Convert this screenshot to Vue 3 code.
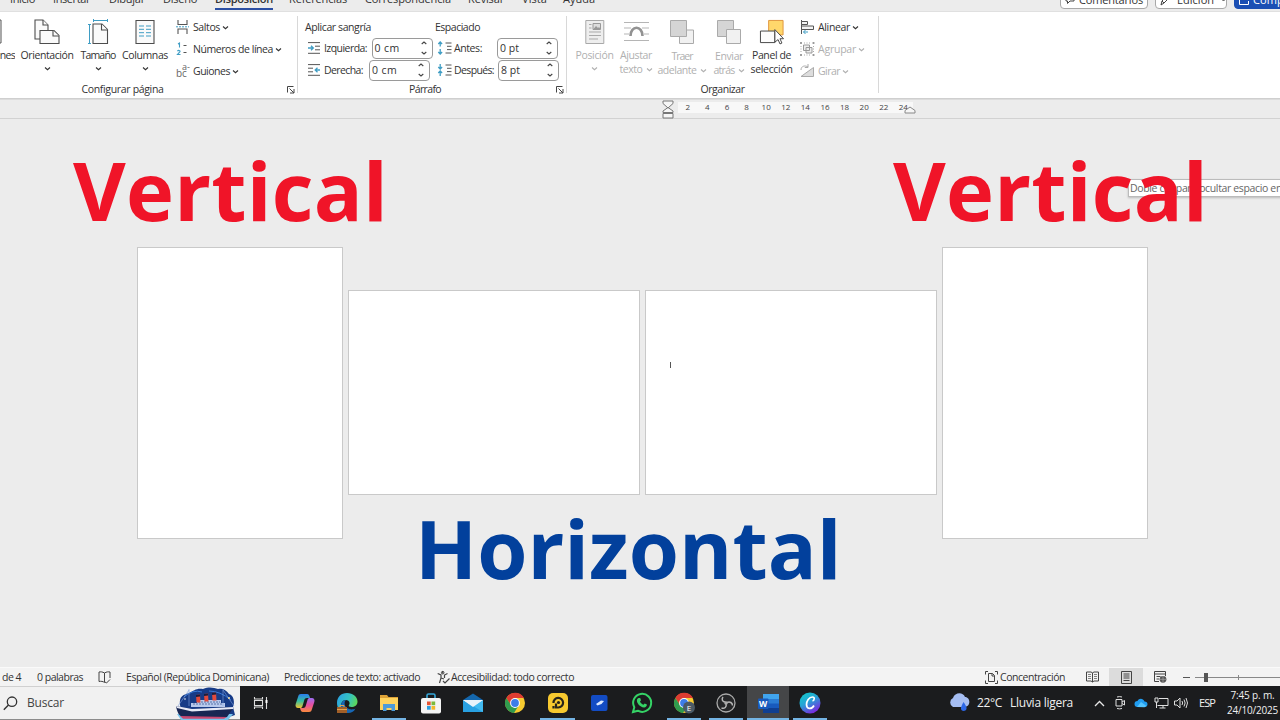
<script setup>
const tabs = [
  { name: 'Inicio', text: 25, cell: 43 },
  { name: 'Insertar', text: 37, cell: 56 },
  { name: 'Dibujar', text: 36, cell: 54 },
  { name: 'Diseño', text: 34, cell: 52 },
  { name: 'Disposición', text: 58, cell: 74, active: true },
  { name: 'Referencias', text: 58, cell: 76 },
  { name: 'Correspondencia', text: 86, cell: 103 },
  { name: 'Revisar', text: 36, cell: 54 },
  { name: 'Vista', text: 25, cell: 41 },
  { name: 'Ayuda', text: 32, cell: 40 }
]
const ruler = [2, 4, 6, 8, 10, 12, 14, 16, 18, 20, 22, 24]
const apps = [
  { id: 'task' }, { id: 'copilot' }, { id: 'edge' }, { id: 'files', open: true }, { id: 'store' },
  { id: 'mail' }, { id: 'chrome' }, { id: 'ld', open: true }, { id: 'blue' }, { id: 'whatsapp' },
  { id: 'chromeE', open: true }, { id: 'obs', open: true }, { id: 'word', open: true, active: true },
  { id: 'canva', open: true }
]

// Spreads the letters so that a label fills the given width in pixels.
const vFit = {
  mounted(el, { value }) {
    const natural = el.getBoundingClientRect().width
    el.style.letterSpacing = (value - natural) / el.textContent.length + 'px'
  }
}
</script>

<template>
  <div class="screen">
    <header class="tabs">
      <nav class="tab-list">
        <div v-for="t in tabs" :key="t.name" class="tab" :class="{ active: t.active }" :style="{ width: t.cell + 'px' }">
          <span v-fit="t.text" class="t">{{ t.name }}</span>
        </div>
      </nav>
      <div class="tab-actions">
        <div class="pill comments">
          <svg width="10" height="12" viewBox="0 0 10 12"><path d="M1 1h8v6H5L2.500 9.500V7H1z" fill="none" stroke="#444" /></svg>
          <span v-fit="64" class="t">Comentarios</span>
        </div>
        <div class="pill editing">
          <svg width="11" height="12" viewBox="0 0 11 12"><path d="M1 11l1-4 6-6 2 2-6 6zM2 7l2 2" fill="none" stroke="#444" /></svg>
          <span v-fit="37" class="t">Edición</span>
          <svg width="7" height="4" viewBox="0 0 7 4"><path d="M1 .5l2.500 2.500L6 .5" fill="none" stroke="#444" /></svg>
        </div>
        <div class="pill share">
          <svg width="10" height="12" viewBox="0 0 10 12"><path d="M3 4H.5v6.500h9V7M3 6c0-3 2-4 5-4M6 0l2.500 2L6 4.500" fill="none" stroke="#fff" /></svg>
          <span v-fit="53" class="t">Compartir</span>
        </div>
      </div>
    </header>

    <section class="ribbon">
      <div class="group setup">
        <div class="body">
          <div class="big margins">
            <svg width="20" height="26" viewBox="0 0 20 26"><path d="M1 1h18v23H1zM16 1v23" fill="#fafafa" stroke="#555" /></svg>
            <span v-fit="43" class="t">Márgenes</span>
          </div>
          <div class="big orient">
            <svg width="26" height="26" viewBox="0 0 26 26"><g fill="#fafafa" stroke="#4d4d4d" stroke-width="1.100"><path d="M1 1h8l5 5v14H1z" /><path d="M9 1v5h5" /><path d="M6 11.500h14l5 5V24.500H6z" /><path d="M19 11.500v5.500h6" /></g></svg>
            <span v-fit="53" class="t">Orientación</span>
            <svg class="chev" width="7" height="4" viewBox="0 0 7 4"><path d="M1 .5l2.500 2.200L6 .5" /></svg>
          </div>
          <div class="big size">
            <svg width="21" height="26" viewBox="0 0 21 26"><path d="M5.500 1.500h14M5.500 0v3M19.500 0v3M1.500 5.500v19M0 5.500h3M0 24.500h3" fill="none" stroke="#3f9dc4" /><g fill="#fafafa" stroke="#4d4d4d" stroke-width="1.100"><path d="M5 5h9l5.500 5.500v14H5z" /><path d="M13.500 5v6h6" /></g></svg>
            <span v-fit="35" class="t">Tamaño</span>
            <svg class="chev" width="7" height="4" viewBox="0 0 7 4"><path d="M1 .5l2.500 2.200L6 .5" /></svg>
          </div>
          <div class="big cols">
            <svg width="20" height="26" viewBox="0 0 20 26"><path d="M1 1.500h18v23H1z" fill="#fafafa" stroke="#4d4d4d" stroke-width="1.100" /><path d="M4 7h5M4 10.300h5M4 13.700h5M4 17h5M11 7h5M11 10.300h5M11 13.700h5M11 17h5" stroke="#3f9dc4" /></svg>
            <span v-fit="46" class="t">Columnas</span>
            <svg class="chev" width="7" height="4" viewBox="0 0 7 4"><path d="M1 .5l2.500 2.200L6 .5" /></svg>
          </div>
          <div class="smalls">
            <div class="small">
              <svg width="13" height="14" viewBox="0 0 13 14"><path d="M2 0v4.500h9V0M2 14V9h9v5" fill="none" stroke="#555" stroke-width="1.100" /><path d="M0 6.800h13" stroke="#3f9dc4" stroke-dasharray="2 1" /></svg>
              <span v-fit="27" class="t">Saltos</span>
              <svg class="chev" width="7" height="4" viewBox="0 0 7 4"><path d="M1 .5l2.500 2.200L6 .5" /></svg>
            </div>
            <div class="small">
              <svg width="13" height="14" viewBox="0 0 13 14"><path d="M2 2l1.500-1v4.500M1.500 9.200c.5-1.200 3-1 2.500.5L1.500 12.500H4.500" fill="none" stroke="#3f9dc4" stroke-width="1.100" /><path d="M7.500 3.500h3M7.500 10.500h3" stroke="#555" stroke-width="1.200" /></svg>
              <span v-fit="80" class="t">Números de línea</span>
              <svg class="chev" width="7" height="4" viewBox="0 0 7 4"><path d="M1 .5l2.500 2.200L6 .5" /></svg>
            </div>
            <div class="small">
              <span class="hyph"><span class="ha">a-</span><span class="hb">bc</span></span>
              <span v-fit="37" class="t">Guiones</span>
              <svg class="chev" width="7" height="4" viewBox="0 0 7 4"><path d="M1 .5l2.500 2.200L6 .5" /></svg>
            </div>
          </div>
        </div>
        <div class="foot"><span v-fit="82" class="t">Configurar página</span>
          <svg class="launch" width="8" height="8" viewBox="0 0 8 8"><path d="M.5 6.500v-6h6M2.500 2.500L7 7M7 3v4H3" /></svg></div>
      </div>

      <div class="group para">
        <div class="para-body">
          <div class="pcol left">
            <div class="prow"><span v-fit="66" class="t">Aplicar sangría</span></div>
            <div class="prow fields">
              <svg width="13" height="12" viewBox="0 0 13 12"><path d="M0 .6h12M7 4.200h5M7 7.800h5M0 11.300h12" stroke="#555" /><path d="M0 6h5M3 3.800L5.300 6 3 8.200" fill="none" stroke="#3f9dc4" stroke-width="1.300" /></svg>
              <span v-fit="43" class="t lab iz">Izquierda:</span>
              <div class="box"><span v-fit="25" class="t">0 cm</span><i class="spin"><svg width="6" height="14" viewBox="0 0 6 14"><path d="M.7 3L3 1l2.300 2M.7 11L3 13l2.300-2" /></svg></i></div>
            </div>
            <div class="prow fields">
              <svg width="13" height="12" viewBox="0 0 13 12"><path d="M0 .6h12M0 4.200h5M0 7.800h5M0 11.300h12" stroke="#555" /><path d="M7 6h5M9.500 3.800L7.200 6l2.300 2.200" fill="none" stroke="#3f9dc4" stroke-width="1.300" /></svg>
              <span v-fit="39" class="t lab de">Derecha:</span>
              <div class="box"><span v-fit="25" class="t">0 cm</span><i class="spin"><svg width="6" height="14" viewBox="0 0 6 14"><path d="M.7 3L3 1l2.300 2M.7 11L3 13l2.300-2" /></svg></i></div>
            </div>
          </div>
          <div class="pcol right">
            <div class="prow"><span v-fit="45" class="t">Espaciado</span></div>
            <div class="prow fields">
              <svg width="14" height="14" viewBox="0 0 14 14"><path d="M7.500 2h6M9 5.300h4.500M9 8.600h4.500M7.500 12h6" stroke="#555" /><path d="M2.200 1v4.500M.3 3l1.900-2 1.900 2M2.200 8v5M.3 11l1.900 2 1.900-2" fill="none" stroke="#3f9dc4" stroke-width="1.300" /></svg>
              <span v-fit="28" class="t lab an">Antes:</span>
              <div class="box"><span v-fit="19" class="t">0 pt</span><i class="spin"><svg width="6" height="14" viewBox="0 0 6 14"><path d="M.7 3L3 1l2.300 2M.7 11L3 13l2.300-2" /></svg></i></div>
            </div>
            <div class="prow fields">
              <svg width="14" height="14" viewBox="0 0 14 14"><path d="M7.500 2h6M9 5.300h4.500M9 8.600h4.500M7.500 12h6" stroke="#555" /><path d="M2.200 1v5M.3 4l1.900 2 1.900-2M2.200 8v5M.3 10l1.900-2 1.900 2" fill="none" stroke="#3f9dc4" stroke-width="1.300" /></svg>
              <span v-fit="40" class="t lab ds">Después:</span>
              <div class="box"><span v-fit="19" class="t">8 pt</span><i class="spin"><svg width="6" height="14" viewBox="0 0 6 14"><path d="M.7 3L3 1l2.300 2M.7 11L3 13l2.300-2" /></svg></i></div>
            </div>
          </div>
        </div>
        <div class="foot"><span v-fit="32" class="t">Párrafo</span>
          <svg class="launch" width="8" height="8" viewBox="0 0 8 8"><path d="M.5 6.500v-6h6M2.500 2.500L7 7M7 3v4H3" /></svg></div>
      </div>

      <div class="group arrange">
        <div class="body">
          <div class="big pos off">
            <svg width="20" height="26" viewBox="0 0 20 26"><path d="M.8 1.500h18v23H.8z" fill="#eee" stroke="#a9a9a9" /><path d="M8 4.500h7.500v6H8z" fill="#ddd" stroke="#999" /><path d="M8.500 10l2.500-3 2 2 1-1 1.500 2" fill="#999" /><path d="M4 5.500h2.500M4 9h2.500M4 13h12M4 16.500h12M4 20h9" stroke="#a9a9a9" /></svg>
            <span v-fit="38" class="t">Posición</span>
            <svg class="chev" width="7" height="4" viewBox="0 0 7 4"><path d="M1 .5l2.500 2.200L6 .5" /></svg>
          </div>
          <div class="big wrap off">
            <svg width="25" height="26" viewBox="0 0 25 26"><path d="M0 3.500h25M0 9h7M18 9h7M0 15h5M20 15h5M0 21.500h25" stroke="#b5b5b5" /><path d="M6.500 17c0-11 12-11 12 0" fill="none" stroke="#929292" stroke-width="2.600" /></svg>
            <span v-fit="32" class="t">Ajustar</span>
            <span class="line2"><span v-fit="23" class="t">texto</span><svg class="chev" width="7" height="4" viewBox="0 0 7 4"><path d="M1 .5l2.500 2.200L6 .5" /></svg></span>
          </div>
          <div class="big fwd off low">
            <svg width="26" height="26" viewBox="0 0 26 26"><path d="M10.500 11h14v13.500h-14z" fill="#f1f1f1" stroke="#aaa" /><path d="M1.500 1.500h16v16h-16z" fill="#d5d5d5" stroke="#aaa" /></svg>
            <span v-fit="21" class="t">Traer</span>
            <span class="line2"><span v-fit="39" class="t">adelante</span><svg class="chev" width="7" height="4" viewBox="0 0 7 4"><path d="M1 .5l2.500 2.200L6 .5" /></svg></span>
          </div>
          <div class="big back off low">
            <svg width="26" height="26" viewBox="0 0 26 26"><path d="M1.500 1.500h16v16h-16z" fill="#d5d5d5" stroke="#aaa" /><path d="M10.500 10.500h14v14h-14z" fill="#f1f1f1" stroke="#aaa" /></svg>
            <span v-fit="28" class="t">Enviar</span>
            <span class="line2"><span v-fit="21" class="t">atrás</span><svg class="chev" width="7" height="4" viewBox="0 0 7 4"><path d="M1 .5l2.500 2.200L6 .5" /></svg></span>
          </div>
          <div class="big panel">
            <svg width="26" height="27" viewBox="0 0 26 27"><path d="M9.500 1.500h15v15h-15z" fill="#ffd76b" stroke="#e0953c" /><path d="M1 12.500h15v12H1z" fill="#fdfdfd" stroke="#444" /><path d="M16 11l9 9.500h-3.700l2 4.500-2 .9-2-4.500L16 24z" fill="#fff" stroke="#444" /></svg>
            <span v-fit="39" class="t">Panel de</span>
            <span class="line2"><span v-fit="42" class="t">selección</span></span>
          </div>
          <div class="smalls">
            <div class="small">
              <svg width="15" height="14" viewBox="0 0 15 14"><path d="M1.500 0v14" stroke="#555" /><path d="M1.500 1.500h6v3h-6zM1.500 6h12v3.500h-12z" fill="#f4f4f4" stroke="#555" /><path d="M8 12H3.500M5.500 10l-2 2 2 2" fill="none" stroke="#3f9dc4" /></svg>
              <span v-fit="32" class="t">Alinear</span>
              <svg class="chev" width="7" height="4" viewBox="0 0 7 4"><path d="M1 .5l2.500 2.200L6 .5" /></svg>
            </div>
            <div class="small off">
              <svg width="15" height="14" viewBox="0 0 15 14"><path d="M3.500 3h6v5.500h-6zM6 5.500h6V11H6z" fill="#eee" stroke="#999" /><path d="M0 1h2M0 13h2M12.500 1h2M12.500 13h2M1 0v2M1 12v2M13.500 0v2M13.500 12v2" stroke="#999" stroke-width="1.400" /><path d="M4 1h7M4 13h7M1 4v6M13.500 4v6" stroke="#aaa" stroke-dasharray="1 1.500" /></svg>
              <span v-fit="38" class="t">Agrupar</span>
              <svg class="chev" width="7" height="4" viewBox="0 0 7 4"><path d="M1 .5l2.500 2.200L6 .5" /></svg>
            </div>
            <div class="small off">
              <svg width="15" height="14" viewBox="0 0 15 14"><path d="M1 6c0-4 4-5 7-3M8 0v3.500H4.800" fill="none" stroke="#aaa" /><path d="M13.500 3.500V12.500H1z" fill="#ddd" stroke="#aaa" /></svg>
              <span v-fit="22" class="t">Girar</span>
              <svg class="chev" width="7" height="4" viewBox="0 0 7 4"><path d="M1 .5l2.500 2.200L6 .5" /></svg>
            </div>
          </div>
        </div>
        <div class="foot"><span v-fit="44" class="t">Organizar</span></div>
      </div>
    </section>

    <div class="ruler">
      <svg class="hourglass" width="12" height="19" viewBox="0 0 12 19"><path d="M1 1h10v2.500L6 8 1 3.500zM1 12.500V11L6 7.500 11 11v1.500zM1 13.500h10v4.500H1z" fill="#f6f6f6" stroke="#777" /></svg>
      <div class="scale"><span v-for="n in ruler" :key="n" class="num">{{ n }}</span></div>
      <svg class="rmark" width="12" height="8" viewBox="0 0 12 8"><path d="M1 7V4.500L6 1l5 3.500V7z" fill="#f6f6f6" stroke="#888" /></svg>
    </div>

    <main class="canvas">
      <div class="tooltip"><span v-fit="152" class="t">Doble clic para ocultar espacio en</span></div>
      <div class="pages">
        <div class="page tall"></div>
        <div class="page wide"></div>
        <div class="page wide"><i class="caret"></i></div>
        <div class="page tall"></div>
      </div>
      <div class="mark m1"><span v-fit="315" class="t">Vertical</span></div>
      <div class="mark m2"><span v-fit="315" class="t">Vertical</span></div>
      <div class="mark m3"><span v-fit="426.5" class="t">Horizontal</span></div>
    </main>

    <footer class="status">
      <div class="st-left">
        <span v-fit="19" class="t pg">de 4</span>
        <span v-fit="46" class="t wd">0 palabras</span>
        <svg class="bk" width="13" height="13" viewBox="0 0 13 13"><path d="M6.500 2C4.500.7 2.500.7 1 1v9.500c2-.4 4-.2 5.500 1M6.500 2v9.500M6.500 2C8.500.7 10.500.7 12 1v6M7 11l1.500 1L12 8.500" fill="none" stroke="#444" /></svg>
        <span v-fit="143" class="t lg">Español (República Dominicana)</span>
        <span v-fit="136" class="t pr">Predicciones de texto: activado</span>
        <svg class="acc" width="13" height="13" viewBox="0 0 13 13"><path d="M.7 2.500L4 4v3L2.500 12M10.500 2.500L7.500 4v3M5.700 0v2.500M4 7l3 1M6 10l2 2 4.500-4.500" fill="none" stroke="#444" stroke-width="1.200" /><circle cx="5.700" cy="1.700" r="1.300" fill="none" stroke="#444" /></svg>
        <span v-fit="123" class="t">Accesibilidad: todo correcto</span>
      </div>
      <div class="st-right">
        <svg class="fc" width="13" height="13" viewBox="0 0 13 13"><path d="M.5 3.500v-3H3M10 .5h2.500v3M.5 9.500v3H3M10 12.500h2.500v-3M3.500 2.500h4l2 2v6h-6zM7 2.500V5h2.500" fill="none" stroke="#444" /></svg>
        <span v-fit="65" class="t">Concentración</span>
        <div class="view"><svg width="13" height="12" viewBox="0 0 13 12"><path d="M.5 1H5l1.500.8L8 1h4.500v9H8l-1.500 1L5 10H.5zM6.500 2v9" fill="none" stroke="#444" /><path d="M2 3.500h3M2 5.500h3M2 7.500h3M8 3.500h3M8 5.500h3M8 7.500h3" stroke="#666" stroke-width=".8" /></svg></div>
        <div class="view on"><svg width="11" height="13" viewBox="0 0 11 13"><path d="M.5.500h10v12H.5z" fill="none" stroke="#444" /><path d="M2.500 3h6M2.500 5h6M2.500 7h6M2.500 9.500h6" stroke="#444" /></svg></div>
        <div class="view"><svg width="13" height="12" viewBox="0 0 13 12"><path d="M5 10.500H.5V.5h11V5M.5 3h11M2.500 5.500h4M2.500 8h2.500" fill="none" stroke="#444" /><circle cx="9" cy="8.300" r="3.400" fill="#555" /><path d="M5.800 8.300h6.400M9 5v6.600" stroke="#aaa" stroke-width=".7" /></svg></div>
        <div class="zoom"><i class="minus"></i><i class="track"><i class="knob"></i><i class="tick"></i></i></div>
      </div>
    </footer>

    <div class="taskbar">
      <div class="search">
        <svg width="15" height="15" viewBox="0 0 15 15"><circle cx="9" cy="5.700" r="4.700" fill="none" stroke="#333" stroke-width="1.300" /><path d="M5.500 9L.8 13.800" stroke="#333" stroke-width="1.400" /></svg>
        <span v-fit="37" class="t">Buscar</span>
        <svg class="ship" width="62" height="33" viewBox="0 0 62 33">
          <path d="M5 18C4 9 8 8 14 6c5-2 7-5 14-4 7-3 11-1 15 0 5-1 8 1 11 5 5 1 6 9 4 13l2 8-12 4H8z" fill="#173b87" />
          <path d="M9 10q9-8 18-5M34 4q11 0 22 9" stroke="#3779d8" fill="none" />
          <path d="M2 27h56l-5 6H6z" fill="#78c4ed" /><path d="M1 19l16 3 42-2-7 10H8C4 29 2 25 1 19z" fill="#172653" />
          <path d="M1 19l16 3 42-2-1 2-41 2.500L2 21z" fill="#e7eaf7" /><path d="M5 29l47 1-3 1.800H8z" fill="#c84770" />
          <path d="M16 20v-4h6v-3h24v3h4v4z" fill="#b8c9ec" /><path d="M18 17h29M23 15h22" stroke="#5972a8" stroke-dasharray="2 1" />
          <path d="M21 8l4-.5.500 8h-4zM29 7l4-.5.500 8h-4zM37 6l4-.5.500 8h-4z" fill="#e34a3d" /><path d="M21 8l4-.5v2l-4 .5zM29 7l4-.5v2l-4 .5zM37 6l4-.5v2l-4 .5z" fill="#1c1e3c" />
          <path d="M14 2v17M48 2v17M14 3L3 19M48 3l11 16" stroke="#80a1dd" stroke-width=".6" /><circle cx="54" cy="11" r="1" fill="#ffe5a3" /><circle cx="10" cy="12" r=".8" fill="#fff" />
        </svg>
      </div>
      <div class="apps">
        <div v-for="a in apps" :key="a.id" class="app" :class="{ open: a.open, active: a.active }">
          <svg v-if="a.id === 'task'" class="taskview" width="16" height="14" viewBox="0 0 16 14"><path d="M1.500 1v2h8V1M1.500 13v-2h8v2M1.500 4.500h8v5h-8zM13.500 1v12" fill="none" stroke="#ddd" stroke-width="1.100" /><path d="M12.500 4h2v3h-2z" fill="#fff" /></svg>
          <svg v-else-if="a.id === 'copilot'" width="20" height="20" viewBox="0 0 20 20">
            <defs><linearGradient id="cpa" x1="0" y1="0" x2="0" y2="1"><stop offset="0" stop-color="#2a7df0" /><stop offset=".5" stop-color="#35c0a0" /><stop offset="1" stop-color="#f2c230" /></linearGradient><linearGradient id="cpb" x1="0" y1="0" x2="0" y2="1"><stop offset="0" stop-color="#9a6df2" /><stop offset=".5" stop-color="#e84fa0" /><stop offset="1" stop-color="#f98a3c" /></linearGradient></defs>
            <path d="M6 1h6c2 0 2.500 2 3 4h-3c-2 0-2.500 1-3 3l-1.500 5c-.4 1.500-1 2-2.500 2H3c-2 0-3-2-2.300-4L3 4c.5-2 1-3 3-3z" fill="url(#cpa)" /><path d="M14 19H8c-2 0-2.500-2-3-4h3c2 0 2.500-1 3-3l1.500-5c.4-1.500 1-2 2.500-2h2c2 0 3 2 2.300 4L17 16c-.5 2-1 3-3 3z" fill="url(#cpb)" />
          </svg>
          <svg v-else-if="a.id === 'edge'" width="22" height="22" viewBox="0 0 22 22">
            <defs><linearGradient id="edg" x1="0" y1="0" x2="1" y2=".4"><stop offset="0" stop-color="#2a9fe8" /><stop offset=".6" stop-color="#35c3c0" /><stop offset="1" stop-color="#5ed857" /></linearGradient></defs>
            <path d="M1 11C1 5 5 1 11 1s10.500 4 10.500 8.500c0 4-3 5.500-6 5.500-2 0-3.500-.8-2.500-2 1.500-2 0-5-3-5-3.500 0-5 3-5 6 0 4 3 6.500 6 7C5 21.500 1 17 1 11z" fill="url(#edg)" /><path d="M5 14c0-3 2-6 5-6-2 1.500-2.500 7 3 9 2 .7 5 .5 6.500-.5-2 4-5.500 5-8.500 4.500-4-.6-6-4-6-7z" fill="#1767b5" /><path d="M1 15h10v6H1z" fill="#a15f28" /><path d="M4 15v-1.500h4V15M1 17.500h10" stroke="#e4a350" fill="none" />
          </svg>
          <svg v-else-if="a.id === 'files'" width="20" height="18" viewBox="0 0 20 18"><path d="M1 1h7l1.500 2H19v5H1z" fill="#dea236" /><path d="M1 4h18v12H1z" fill="#ffd35d" /><path d="M4 17v-7h12v7h-3.500v-3h-5v3z" fill="#4e9bd8" /></svg>
          <svg v-else-if="a.id === 'store'" width="20" height="21" viewBox="0 0 20 21"><path d="M6 6V2.500Q6 1 7.500 1h5Q14 1 14 2.500V6" fill="none" stroke="#36a7d8" stroke-width="1.600" /><rect y="5" width="20" height="15.500" rx="2" fill="#f4f4f4" /><path d="M6 8.500h3.700v3.700H6z" fill="#e65332" /><path d="M10.500 8.500h3.700v3.700h-3.700z" fill="#7cba3a" /><path d="M6 13h3.700v3.700H6z" fill="#2b9fe0" /><path d="M10.500 13h3.700v3.700h-3.700z" fill="#f2b82c" /></svg>
          <svg v-else-if="a.id === 'mail'" width="22" height="20" viewBox="0 0 22 20"><path d="M1 7l10-6.500L21 7v12H1z" fill="#1467ad" /><path d="M1 7h20l-10 8z" fill="#e9f2fa" /><path d="M21 7v12H1z" fill="#42baf0" /><path d="M1 7v12h20z" fill="#28a0e2" /><path d="M1 7h20l-10 7z" fill="#e9f2fa" /></svg>
          <svg v-else-if="a.id === 'chrome' || a.id === 'chromeE'" width="24" height="22" viewBox="0 0 24 22">
            <circle cx="12" cy="11" r="10" fill="#f7cb30" /><path d="M12 6h9a10 10 0 0 0-17.700 0l4.500 7z" fill="#de3c31" /><path d="M3.300 6A10 10 0 0 0 11 21l5-8-8 0z" fill="#309b4e" /><circle cx="12" cy="11" r="4.900" fill="#fff" /><circle cx="12" cy="11" r="3.900" fill="#3c7de8" />
            <g v-if="a.id === 'chromeE'"><circle cx="17" cy="15.500" r="6" fill="#4b5a66" /><text x="17" y="18.600" class="badge" text-anchor="middle">E</text></g>
          </svg>
          <svg v-else-if="a.id === 'ld'" width="20" height="20" viewBox="0 0 20 20"><rect width="20" height="20" rx="5" fill="#f8c92f" /><path d="M5.500 15.500V13M5.500 10a4.800 4.800 0 1 1 4.800 4.500H8V10.500" fill="none" stroke="#28241a" stroke-width="2.200" /><circle cx="10.500" cy="9.500" r="1.600" fill="#28241a" /></svg>
          <svg v-else-if="a.id === 'blue'" width="17" height="16" viewBox="0 0 17 16"><rect width="16.500" height="16" rx="2" fill="#134cc4" /><path d="M5 9l5-3.500 3 .5-2.500 3-4 1.500z" fill="#dceaff" /></svg>
          <svg v-else-if="a.id === 'whatsapp'" width="22" height="22" viewBox="0 0 22 22"><path d="M2 20l1.300-4.800a9 9 0 1 1 3.500 3.500z" fill="none" stroke="#35d366" stroke-width="2" /><path d="M7.500 6l1.700 0 .8 2.300-1 1.200c.8 1.700 2 2.600 3.400 3.200l1.300-1.200 2.200 1.100c0 2-1.500 3-3 2.800-4-.6-7-4-7-7 0-1 .6-2 1.600-2.400z" fill="#35d366" /></svg>
          <svg v-else-if="a.id === 'obs'" width="20" height="20" viewBox="0 0 20 20"><circle cx="10" cy="10" r="9" fill="#252628" stroke="#aaa" stroke-width="1.300" /><path d="M9.500 9C6 9 5.500 6 7 4M11 9.500c3-1.500 5.500.5 5.500 3M10 11c1 3-1.500 5-4.500 4" fill="none" stroke="#b5b5b5" stroke-width="1.500" /><circle cx="10" cy="10" r="1.800" fill="#aaa" /></svg>
          <svg v-else-if="a.id === 'word'" width="21" height="19" viewBox="0 0 21 19"><rect x="5" width="16" height="19" rx="1.500" fill="#2b7cd3" /><path d="M5 0h16v5H5z" fill="#41a5ee" /><path d="M5 9.500h16V14H5z" fill="#185abd" /><path d="M5 14h16v5H5z" fill="#103f91" /><rect y="4.500" width="10.500" height="10.500" rx="1" fill="#185abd" /><text x="5.200" y="13" class="wletter" text-anchor="middle">W</text></svg>
          <svg v-else width="22" height="22" viewBox="0 0 22 22"><defs><linearGradient id="cnv" x1="0" y1="0" x2=".6" y2="1"><stop offset="0" stop-color="#10cdc6" /><stop offset=".5" stop-color="#25a4d6" /><stop offset="1" stop-color="#7a2ae0" /></linearGradient></defs><circle cx="11" cy="11" r="10.500" fill="url(#cnv)" /><path d="M13.500 9c2-.5 2.500-4 0-4-3.500 0-6 4-6 7.500 0 4.500 5 5.500 7.500 1" fill="none" stroke="#fff" stroke-width="1.700" /></svg>
        </div>
      </div>
      <div class="tray">
        <svg class="cloud" width="24" height="20" viewBox="0 0 24 20"><path d="M5 14a5 5 0 0 1 0-9C7-1 15-1 17 4c5.500 0 6.500 10-1 10z" fill="#a5bdf2" /><path d="M15.500 9c2 3 3.500 5 3 7-.7 2.500-5 2.500-5.500 0-.3-2 1-4 2.500-7z" fill="#2c67e8" /></svg>
        <span v-fit="25" class="t temp">22°C</span>
        <span v-fit="63" class="t rain">Lluvia ligera</span>
        <svg class="up" width="11" height="7" viewBox="0 0 11 7"><path d="M1 6l4.500-4.500L10 6" fill="none" stroke="#e8e8e8" stroke-width="1.300" /></svg>
        <svg class="cam" width="11" height="14" viewBox="0 0 11 14"><path d="M1 3.500h6v6.500H1zM7 6l2.500-1.500v4.500L7 7.500M2 1q2.500-.8 5 0M2 12.500q2.500.8 5 0" fill="none" stroke="#e0e0e0" /></svg>
        <svg class="od" width="14" height="10" viewBox="0 0 14 10"><path d="M3.500 9a3 3 0 0 1 0-6C5 0 9 0 10.500 3.500c4 0 4 5.500 0 5.500z" fill="#209cf0" /><path d="M3 9l4-5 5.500 4-2 1.200z" fill="#53c4ff" /></svg>
        <svg class="net" width="15" height="12" viewBox="0 0 15 12"><path d="M5 1.500h9v7H3.500M9 8.500V11M5.500 11h6M1 1h3v4H1zM2.500 5v6" fill="none" stroke="#e0e0e0" /></svg>
        <svg class="vol" width="14" height="12" viewBox="0 0 14 12"><path d="M.5 4h2.500l3-3v10l-3-3H.5zM8 4q1.300 2 0 4M10 2.500q2.300 3.500 0 7M12 1q3 5 0 10" fill="none" stroke="#ddd" /></svg>
        <span v-fit="16" class="t esp">ESP</span>
        <div class="clock"><span v-fit="44" class="t">7:45 p. m.</span><span v-fit="51" class="t">24/10/2025</span></div>
      </div>
    </div>
  </div>
</template>

<style>
body { margin: 0; overflow: hidden; }
</style>

<style scoped>
.screen { width: 1280px; height: 720px; display: flex; flex-direction: column; overflow: hidden; background: #ececec; font-family: "Open Sans", "Noto Sans", sans-serif; font-size: 10.5px; font-weight: 500; line-height: 14px; color: #333; }
.screen * { box-sizing: border-box; }
svg { display: block; flex: none; overflow: visible; }
.t { display: inline-block; white-space: nowrap; flex: none; }
.tabs { height: 12px; flex: none; display: flex; justify-content: space-between; overflow: hidden; border-bottom: 1px solid #e0e0e0; font-size: 11px; }
.tab-list { display: flex; padding-left: 10px; }
.tab { height: 10px; flex: none; display: flex; align-items: flex-start; }
.tab .t { margin-top: -8px; }
.tab.active .t { font-weight: 600; height: 18px; border-bottom: 2px solid #2b4fa3; }
.tab-actions { display: flex; width: 220px; flex: none; gap: 7px; margin-left: auto; }
.pill { height: 19px; margin-top: -10px; border: 1px solid #a8a8a8; border-radius: 4px; background: #fff; display: flex; align-items: center; flex: none; padding-left: 4px; gap: 4px; }
.comments { width: 88px; }
.editing { width: 72px; padding-left: 4px; gap: 6px; }
.share { width: 80px; background: #1b4fb4; border-color: #1b4fb4; color: #fff; }
.ribbon { height: 86px; flex: none; background: #fff; display: flex; padding-top: 4px; }
.group { height: 77px; border-right: 1px solid #d8d8d8; flex: none; display: flex; flex-direction: column; }
.setup { width: 298px; }
.para { width: 269px; }
.arrange { width: 312px; }
.body { height: 66px; display: flex; flex: none; }
.big { display: flex; flex-direction: column; align-items: center; flex: none; padding-top: 3px; }
.big > svg:first-child { height: 26px; margin-bottom: 3px; }
.big .chev { margin-top: 5px; }
.line2 { display: flex; align-items: center; gap: 3px; }
.big .line2 .chev { margin-top: 1px; }
.chev { fill: none; stroke: currentColor; stroke-width: 1.1; }
.off { color: #b0b0b0; }
.low > .t { margin-top: 1px; }
.margins { width: 15px; align-items: flex-end; overflow: hidden; margin-right: 1px; }
.margins > svg:first-child { margin-right: 13px; }
.orient { width: 62px; }
.size { width: 40px; }
.cols { width: 54px; }
.smalls { display: flex; flex-direction: column; margin-left: 4px; }
.small { height: 22.3px; display: flex; align-items: center; gap: 4px; }
.small .chev { margin-top: 1px; margin-left: -2px; }
.arrange .smalls { margin-left: 2px; }
.arrange .small { gap: 3px; }
.arrange .small .chev { margin-left: -1px; }
.hyph { width: 13px; height: 16px; display: flex; flex-direction: column; color: #666; font-size: 9px; line-height: 7px; }
.ha { align-self: flex-end; margin-right: -1px; }
.hb { font-size: 10px; }
.foot { height: 14px; display: flex; justify-content: center; align-items: center; position: relative; }
.setup .foot { padding-right: 52px; }
.para .foot { padding-right: 14px; }
.launch { position: absolute; right: 2px; top: 4px; fill: none; stroke: #444; }
.para-body { display: flex; height: 66px; flex: none; }
.pcol { display: flex; flex-direction: column; flex: none; }
.pcol.left { width: 130px; padding-left: 7px; }
.pcol.right { padding-left: 7px; }
.prow { height: 22px; display: flex; align-items: center; }
.prow:first-child { height: 21px; }
.fields { padding-left: 3px; }
.lab { margin-left: 3px; }
.iz { margin-right: 4.5px; }
.de { margin-right: 6px; }
.right .lab { margin-left: 2px; }
.an { margin-right: 15px; }
.ds { margin-right: 4px; }
.box { width: 61px; height: 21px; border: 1px solid #9a9a9a; border-radius: 4px; background: #fff; display: flex; align-items: center; justify-content: space-between; padding: 0 5px 0 2px; flex: none; }
.spin { display: block; }
.spin path { fill: none; stroke: #444; stroke-width: 1.1; }
.pos { width: 54px; padding-left: 1px; }
.wrap { width: 30px; }
.fwd { width: 62px; }
.back { width: 32px; }
.panel { width: 53px; }
.ruler { height: 21px; flex: none; border-top: 1px solid #cfcfcf; border-bottom: 1px solid #d2d2d2; display: flex; align-items: flex-start; padding-left: 662px; box-shadow: inset 0 1px 0 #dcdcdc; }
.hourglass { margin-top: 1px; }
.scale { display: flex; height: 11px; margin: 3px 0 0 4px; background: #f8f8f8; font-size: 8px; line-height: 10px; color: #444; }
.num { width: 19.6px; text-align: center; }
.rmark { margin: 7px 0 0 -9px; }
.canvas { height: 548px; flex: none; position: relative; background: #ececec; display: flex; justify-content: center; }
.pages { display: flex; align-items: center; gap: 5px; height: 291px; margin-top: 128px; margin-left: 5px; }
.page { background: #fff; border: 1px solid #c9c9c9; flex: none; }
.tall { width: 206px; height: 292px; }
.wide { width: 292px; height: 205px; position: relative; }
.caret { position: absolute; left: 24px; top: 71px; width: 1px; height: 6px; background: #555; }
.tooltip { position: absolute; left: 1128px; top: 60px; width: 160px; height: 18px; border: 1px solid #bbb; background: #fff; padding: 1px 0 0 1px; color: #666; box-shadow: 0 1px 2px #bbb; }
.mark { position: absolute; font-weight: 700; font-size: 81.2px; line-height: 100px; }
.m1 { left: 73px; top: 21px; color: #f01428; }
.m2 { left: 893px; top: 21px; color: #f01428; }
.m3 { left: 415px; top: 379px; color: #02409c; }
.status { height: 19px; flex: none; background: #f3f3f3; border-top: 1px solid #fafafa; display: flex; justify-content: space-between; align-items: center; }
.st-left, .st-right { display: flex; align-items: center; height: 18px; }
.st-left { padding-left: 2px; }
.pg { margin-right: 16px; }
.wd { margin-right: 15px; }
.bk { margin-right: 15px; }
.lg { margin-right: 15px; }
.pr { margin-right: 17px; }
.acc { margin-right: 1px; }
.fc { margin-right: 2px; }
.view { width: 34px; height: 18px; display: flex; align-items: center; justify-content: center; }
.view.on { background: #dcdcdc; }
.st-right .t { margin-right: 10px; }
.zoom { display: flex; align-items: center; width: 103px; padding-left: 6px; gap: 5px; flex: none; }
.minus { width: 7px; height: 1px; background: #555; flex: none; }
.track { width: 85px; height: 1px; background: #888; position: relative; }
.knob { position: absolute; left: 9px; top: -4px; width: 4px; height: 9px; background: #555; }
.tick { position: absolute; left: 43px; top: -2px; width: 1px; height: 5px; background: #888; }
.taskbar { height: 34px; flex: none; background: #1b1c1e; display: flex; }
.search { width: 240px; flex: none; background: #f1f1f1; border-top: 1px solid #d0d0d0; border-bottom: 1px solid #8c8c8c; display: flex; align-items: center; padding-left: 3px; font-size: 12px; color: #444; }
.search > .t { margin-left: 9px; }
.ship { margin-left: 111px; }
.apps { display: flex; padding-left: 1.5px; }
.taskview { margin-left: -3px; }
.app { width: 42.15px; height: 34px; display: flex; align-items: center; justify-content: center; position: relative; }
.app.active { background: #454648; }
.app.open::after { content: ""; position: absolute; left: 4px; right: 4px; bottom: 0; height: 2px; background: #74b4e4; }
.app.active::after { left: 0; right: 0; }
.badge { font-size: 8px; fill: #fff; }
.wletter { font-size: 8.5px; font-weight: 700; fill: #fff; }
.tray { margin-left: auto; display: flex; align-items: center; width: 332px; flex: none; color: #f0f0f0; font-size: 12px; font-weight: 400; }
.cloud { margin-right: 5px; }
.temp { margin-right: 8px; }
.rain { margin-right: 21px; }
.up { margin-right: 10px; }
.cam { margin-right: 8px; }
.od { margin-right: 6px; }
.net { margin-right: 5px; }
.vol { margin-right: 11px; }
.esp { margin-right: 12px; font-size: 11px; }
.clock { display: flex; flex-direction: column; align-items: center; font-size: 10px; line-height: 15px; width: 51px; flex: none; }
</style>
